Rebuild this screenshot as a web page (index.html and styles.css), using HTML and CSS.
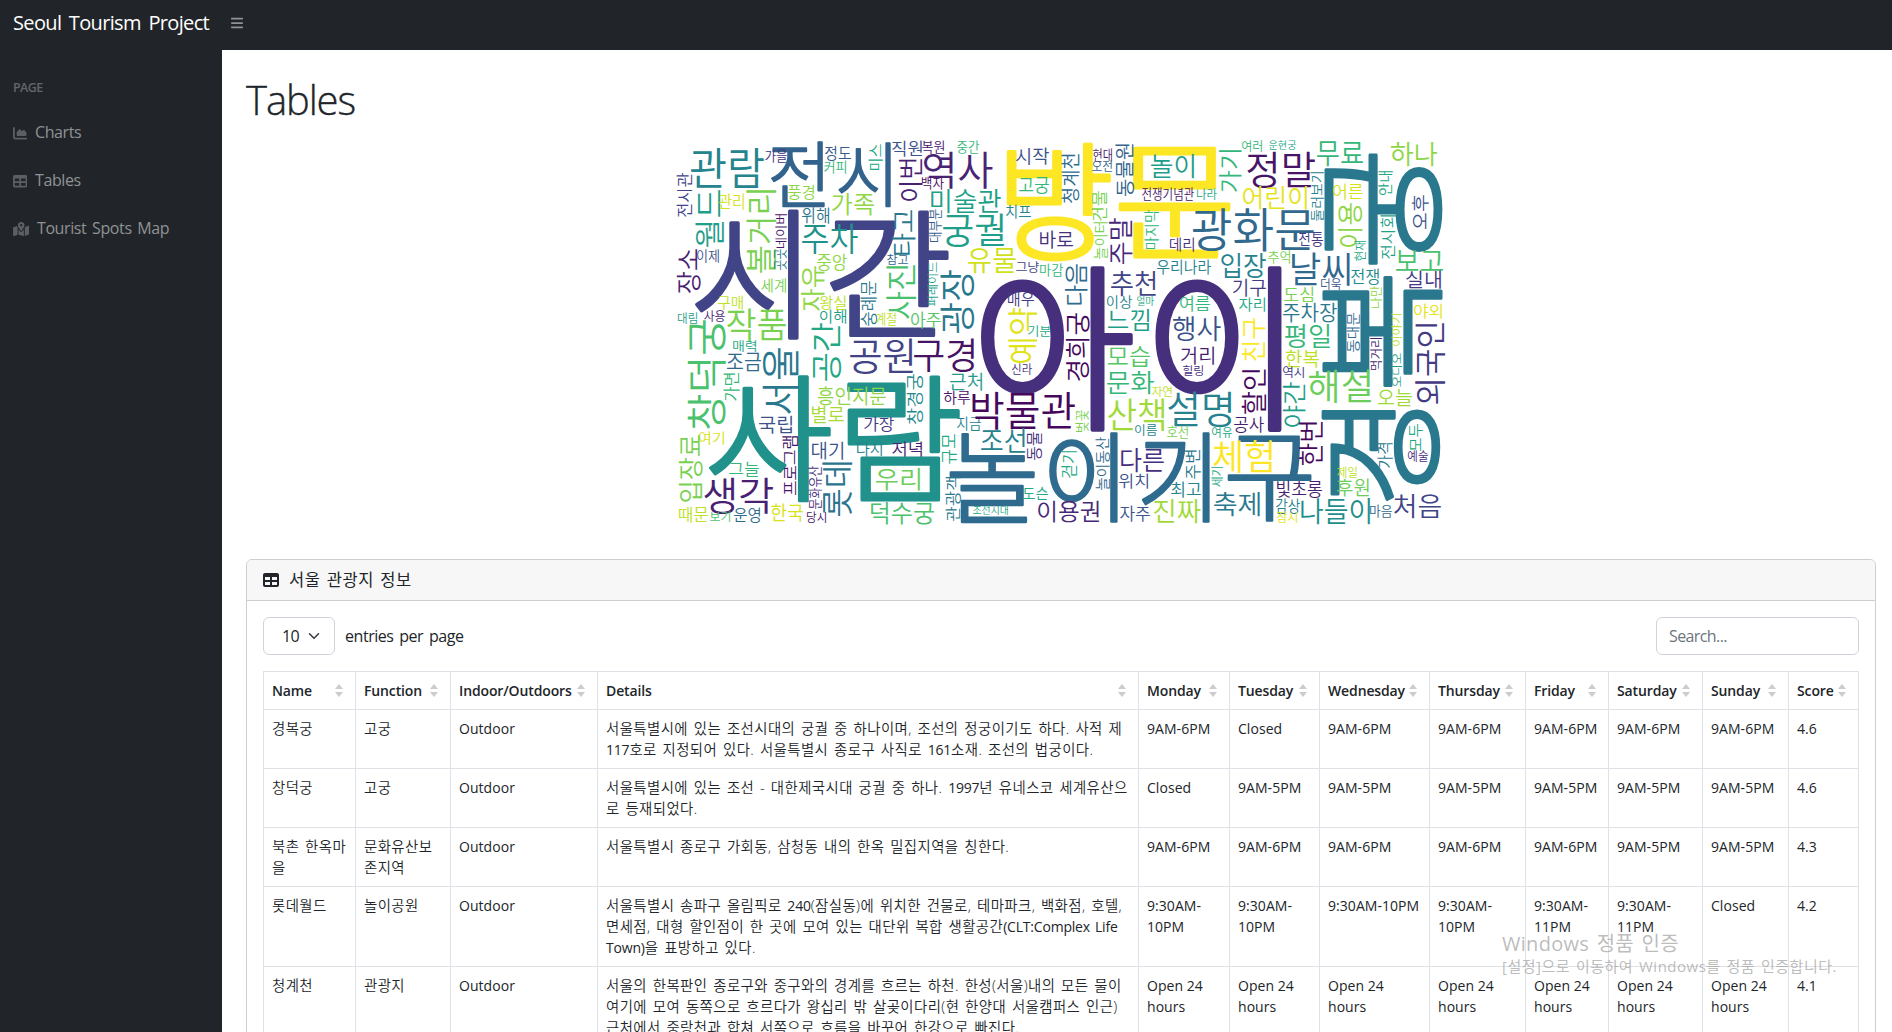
FILE: index.html
```html
<!DOCTYPE html>
<html lang="ko">
<head>
<meta charset="utf-8">
<title>Seoul Tourism Project</title>
<link rel="stylesheet" href="styles.css">
</head>
<body>
<nav class="topnav">
  <a class="brand">Seoul Tourism Project</a>
  <svg class="bars" viewBox="0 0 448 512"><path d="M0 96C0 78.3 14.3 64 32 64H416c17.7 0 32 14.3 32 32s-14.3 32-32 32H32C14.3 128 0 113.7 0 96zM0 256c0-17.7 14.3-32 32-32H416c17.7 0 32 14.3 32 32s-14.3 32-32 32H32c-17.7 0-32-14.3-32-32zM448 416c0 17.7-14.3 32-32 32H32c-17.7 0-32-14.3-32-32s14.3-32 32-32H416c17.7 0 32 14.3 32 32z"/></svg>
</nav>
<div class="layout">
  <aside class="sidenav">
    <div class="heading">PAGE</div>
    <a class="link"><svg viewBox="0 0 512 512"><path d="M64 64c0-17.7-14.3-32-32-32S0 46.3 0 64V400c0 44.2 35.8 80 80 80H480c17.7 0 32-14.3 32-32s-14.3-32-32-32H80c-8.8 0-16-7.2-16-16V64zm96 288H448c17.7 0 32-14.3 32-32V251.8c0-7.6-2.7-15-7.7-20.8l-65.8-76.8c-12.1-14.2-33.7-15-46.9-1.8l-21 21c-10 10-26.4 9.2-35.4-1.6l-39.2-47c-12.6-15.1-35.7-15.4-48.7-.6L135.9 215c-5.1 5.8-7.9 13.3-7.9 21.1v84c0 17.7 14.3 32 32 32z"/></svg>Charts</a>
    <a class="link"><svg viewBox="0 0 512 512"><path d="M64 256V160H224v96H64zm0 64H224v96H64V320zm224 96V320H448v96H288zM448 256H288V160H448v96zM64 32C28.7 32 0 60.7 0 96V416c0 35.3 28.7 64 64 64H448c35.3 0 64-28.7 64-64V96c0-35.3-28.7-64-64-64H64z"/></svg>Tables</a>
    <a class="link map"><svg viewBox="0 0 576 512"><path d="M408 120c0 54.6-73.1 151.9-105.2 192c-7.7 9.6-22 9.6-29.6 0C241.1 271.9 168 174.6 168 120C168 53.7 221.7 0 288 0s120 53.7 120 120zm8 80.4c3.5-6.9 6.7-13.8 9.6-20.6c.5-1.2 1-2.5 1.5-3.7l116-46.4C558.9 123.4 576 135 576 152V422.8c0 9.8-6 18.6-15.1 22.3L416 503V200.4zM137.6 138.3c2.4 14.1 7.2 28.3 12.8 41.5c2.9 6.8 6.1 13.7 9.6 20.6V451.8L32.9 502.7C17.1 509 0 497.4 0 480.4V209.6c0-9.8 6-18.6 15.1-22.3l122.6-49zM327.8 332c13.9-17.4 35.7-45.7 56.2-77V504.3L192 449.4V255c20.5 31.3 42.3 59.6 56.2 77c20.5 25.6 59.1 25.6 79.6 0zM288 152a40 40 0 1 0 0-80 40 40 0 1 0 0 80z"/></svg>Tourist Spots Map</a>
  </aside>
  <main class="content">
    <h1>Tables</h1>
    <svg class="cloud" id="cloud" viewBox="0 0 800 400"></svg>
    <section class="card">
      <header class="card-head"><svg viewBox="0 0 512 512"><path d="M64 256V160H224v96H64zm0 64H224v96H64V320zm224 96V320H448v96H288zM448 256H288V160H448v96zM64 32C28.7 32 0 60.7 0 96V416c0 35.3 28.7 64 64 64H448c35.3 0 64-28.7 64-64V96c0-35.3-28.7-64-64-64H64z"/></svg>서울 관광지 정보</header>
      <div class="card-body">
        <div class="controls">
          <div class="select">10<svg viewBox="0 0 16 16"><path d="m2 5 6 6 6-6"/></svg></div>
          <span class="per-page">entries per page</span>
          <input class="search" placeholder="Search...">
        </div>
        <table>
          <colgroup><col class="w92"><col class="w95"><col class="w147"><col class="w541"><col class="w91"><col class="w90"><col class="w110"><col class="w96"><col class="w83"><col class="w94"><col class="w86"><col class="w70"></colgroup>
          <thead><tr>
            <th><div>Name<i></i></div></th><th><div>Function<i></i></div></th><th><div>Indoor/Outdoors<i></i></div></th><th><div>Details<i></i></div></th><th><div>Monday<i></i></div></th><th><div>Tuesday<i></i></div></th><th><div>Wednesday<i></i></div></th><th><div>Thursday<i></i></div></th><th><div>Friday<i></i></div></th><th><div>Saturday<i></i></div></th><th><div>Sunday<i></i></div></th><th><div>Score<i></i></div></th>
          </tr></thead>
          <tbody>
            <tr><td class="ko">경복궁</td><td class="ko">고궁</td><td>Outdoor</td><td class="ko">서울특별시에 있는 조선시대의 궁궐 중 하나이며, 조선의 정궁이기도 하다. 사적 제<br><b>117</b>호로 지정되어 있다. 서울특별시 종로구 사직로 <b>161</b>소재. 조선의 법궁이다.</td><td>9AM-6PM</td><td>Closed</td><td>9AM-6PM</td><td>9AM-6PM</td><td>9AM-6PM</td><td>9AM-6PM</td><td>9AM-6PM</td><td>4.6</td></tr>
            <tr><td class="ko">창덕궁</td><td class="ko">고궁</td><td>Outdoor</td><td class="ko">서울특별시에 있는 조선 - 대한제국시대 궁궐 중 하나. <b>1997</b>년 유네스코 세계유산으<br>로 등재되었다.</td><td>Closed</td><td>9AM-5PM</td><td>9AM-5PM</td><td>9AM-5PM</td><td>9AM-5PM</td><td>9AM-5PM</td><td>9AM-5PM</td><td>4.6</td></tr>
            <tr><td class="ko">북촌 한옥마<br>을</td><td class="ko">문화유산보<br>존지역</td><td>Outdoor</td><td class="ko">서울특별시 종로구 가회동, 삼청동 내의 한옥 밀집지역을 칭한다.</td><td>9AM-6PM</td><td>9AM-6PM</td><td>9AM-6PM</td><td>9AM-6PM</td><td>9AM-6PM</td><td>9AM-5PM</td><td>9AM-5PM</td><td>4.3</td></tr>
            <tr><td class="ko">롯데월드</td><td class="ko">놀이공원</td><td>Outdoor</td><td class="ko">서울특별시 송파구 올림픽로 <b>240</b>(잠실동)에 위치한 건물로, 테마파크, 백화점, 호텔,<br>면세점, 대형 할인점이 한 곳에 모여 있는 대단위 복합 생활공간<b>(CLT:Complex Life</b><br><b>Town)</b>을 표방하고 있다.</td><td>9:30AM-<br>10PM</td><td>9:30AM-<br>10PM</td><td>9:30AM-10PM</td><td>9:30AM-<br>10PM</td><td>9:30AM-<br>11PM</td><td>9:30AM-<br>11PM</td><td>Closed</td><td>4.2</td></tr>
            <tr><td class="ko">청계천</td><td class="ko">관광지</td><td>Outdoor</td><td class="ko">서울의 한복판인 종로구와 중구와의 경계를 흐르는 하천. 한성(서울)내의 모든 물이<br>여기에 모여 동쪽으로 흐르다가 왕십리 밖 살곶이다리(현 한양대 서울캠퍼스 인근)<br>근처에서 중랑천과 합쳐 서쪽으로 흐름을 바꾸어 한강으로 빠진다.</td><td>Open 24<br>hours</td><td>Open 24<br>hours</td><td>Open 24<br>hours</td><td>Open 24<br>hours</td><td>Open 24<br>hours</td><td>Open 24<br>hours</td><td>Open 24<br>hours</td><td>4.1</td></tr>
          </tbody>
        </table>
      </div>
    </section>
  </main>
</div>
<div class="activation"><p class="act-title">Windows 정품 인증</p><p class="act-sub">[설정]으로 이동하여 Windows를 정품 인증합니다.</p></div>
<script src="cloud.js"></script>
</body>
</html>
```
FILE: styles.css
```css
* { box-sizing: border-box; }
body {
  margin: 0;
  height: 1032px;
  overflow: hidden;
  background: #fff;
  color: #212529;
  font: 16px/1.5 "Open Sans", "Noto Sans CJK KR", sans-serif;
}
.topnav {
  display: flex;
  align-items: center;
  height: 50px;
  padding: 0 0 4px 13px;
  background: #212529;
}
.brand { width: 217px; color: #fff; font-size: 20px; letter-spacing: -.65px; word-spacing: 3px; white-space: nowrap; }
.bars { width: 14px; height: 14px; fill: #909294; }
.layout { display: flex; height: 982px; }
.sidenav {
  flex: 0 0 222px;
  padding: 27px 0 0 13px;
  background: #212529;
}
.heading { height: 31px; color: #636669; font-size: 12.5px; line-height: 22px; font-weight: 600; letter-spacing: -.6px; }
.link { display: flex; align-items: center; height: 48px; color: #909294; letter-spacing: -.4px; word-spacing: 2px; }
.link svg { width: 14.4px; height: 14.4px; margin: 2px 7.6px 0 0; fill: #5c5f63; }
.link.map svg { width: 16.4px; }
.content { flex: 1; min-width: 0; padding: 24px 16px 0 24px; overflow: hidden; }
h1 { margin: 0 0 8px; font-size: 40px; line-height: 48px; font-weight: 300; letter-spacing: -1.1px; padding-top: 2px; height: 48px; -webkit-text-stroke: .35px #212529; }
.cloud { display: block; width: 800px; height: 400px; margin: 0 auto 29px; overflow: visible; }
.cloud text { font-family: "Noto Sans CJK KR", sans-serif; font-size: 100px; font-weight: 350; }
.cloud .big { font-weight: 300; stroke-linejoin: round; vector-effect: non-scaling-stroke; }
.card { height: 600px; border: 1px solid #cdced0; border-radius: 6px; }
.card-head {
  display: flex;
  align-items: center;
  height: 41px;
  padding-left: 16px;
  border-bottom: 1px solid #cdced0;
  border-radius: 5px 5px 0 0;
  background: #f7f7f7;
  font-size: 16.5px;
  letter-spacing: .5px;
  word-spacing: 1.7px;
}
.card-head svg { width: 16px; height: 16px; margin-right: 10px; fill: #212529; }
.card-body { padding: 16px; }
.controls { display: flex; align-items: center; height: 38px; margin-bottom: 16px; }
.select {
  display: flex;
  align-items: center;
  width: 72px;
  height: 38px;
  padding-left: 18px;
  border: 1px solid #ced4da;
  border-radius: 6px;
  letter-spacing: -.6px;
}
.select svg { width: 12px; height: 12px; margin-left: 9px; fill: none; stroke: #343a40; stroke-width: 2; stroke-linecap: round; stroke-linejoin: round; }
.per-page { margin-left: 10px; letter-spacing: -.45px; word-spacing: 2px; }
.search {
  width: 203px;
  height: 38px;
  margin-left: auto;
  padding: 0 12px;
  border: 1px solid #ced4da;
  border-radius: 6px;
  font: inherit;
  letter-spacing: -.6px;
}
.search::placeholder { color: #6c757d; opacity: 1; }
table { width: 1596px; border-collapse: collapse; table-layout: fixed; font-size: 14px; line-height: 21px; white-space: nowrap; }
th, td { padding: 8px; border: 1px solid #dee2e6; text-align: left; vertical-align: top; letter-spacing: .05px; }
th { font-weight: 600; letter-spacing: -.13px; }
th div { display: flex; justify-content: space-between; align-items: center; height: 21px; margin-right: 4px; }
th i { display: flex; flex: none; flex-direction: column; justify-content: space-between; width: 8px; height: 13px; }
th i::before, th i::after { content: ""; border: 4px solid transparent; border-top-width: 0; border-bottom: 5px solid #ccc; }
th i::after { border-bottom-width: 0; border-bottom-color: transparent; border-top: 5px solid #ccc; }
.ko { font-size: 14.4px; letter-spacing: .43px; word-spacing: 1.6px; font-weight: 350; }
.ko b { font-weight: 400; font-size: 14px; letter-spacing: -.2px; }
.w92 { width: 92px; } .w95 { width: 95px; } .w147 { width: 147px; } .w541 { width: 541px; }
.w91 { width: 91px; } .w90 { width: 90px; } .w110 { width: 110px; } .w96 { width: 96px; }
.w83 { width: 83px; } .w94 { width: 94px; } .w86 { width: 86px; } .w70 { width: 70px; }
.activation { position: absolute; left: 1502px; top: 929px; color: rgba(150,150,150,.65); white-space: nowrap; }
.activation p { margin: 0; }
.act-title { font-size: 20px; line-height: 30px; letter-spacing: .3px; word-spacing: 2px; }
.act-sub { font-size: 15px; line-height: 15px; letter-spacing: .5px; word-spacing: 1.5px; }
```
FILE: cloud.js
```js
// Each entry: text, left, top, right, bottom, colour, 1 when turned to read upwards.
// The largest words are set syllable by syllable.
const words = [
["전",110,11,164,77,"#33638d"],["시",177,11,230,77,"#33638d"],
["시",33,79,138,211,"#414487"],["간",167,79,289,208,"#414487"],
["사",48,244,170,372,"#21918c"],["람",186,244,300,371,"#21918c"],
["방",345,13,451,133,"#fde725"],["문",457,17,571,130,"#fde725"],
["아",318,135,472,302,"#46307e"],["이",492,135,621,302,"#46307e"],
["놀",288,302,375,393,"#2f6b8e"],["이",387,302,457,393,"#2f6b8e"],["기",480,302,549,393,"#2f6b8e"],["구",566,305,652,392,"#2f6b8e"],
["경",661,278,781,372,"#2a788e",1],["복",661,144,782,258,"#2a788e",1],["궁",664,22,782,136,"#2a788e",1],
["관람",30,18,103,58,"#25858e"],["가을",104,20,126,32,"#46307e"],["정도",164,16,190,30,"#38598c"],
["커피",163,31,185,43,"#35b779"],["전시관",16,43,31,87,"#414487",1],["월드",34,60,62,117,"#1f9e89",1],["관리",58,64,83,79,"#d8e219"],
["볼거리",85,60,114,143,"#7ad151",1],["풍경",127,55,153,69,"#8ed645"],["가족",171,63,213,85,"#8ed645"],["위해",141,78,168,93,"#2c738e"],
["주차",141,94,197,124,"#21918c"],["네이버",115,84,126,118,"#481467",1],["이제",36,120,58,132,"#3b528b"],["곳곳",113,119,125,140,"#2a788e",1],
["중앙",156,124,186,140,"#8ed645"],["장소",16,119,39,163,"#482173",1],["세계",100,149,125,162,"#7ad151"],
["자유",140,136,163,181,"#8ed645",1],["왕실",159,166,185,179,"#bddf26"],["구매",57,166,82,179,"#bddf26"],["이해",159,180,185,193,"#1f9e89"],
["숭례문",200,151,215,196,"#2a788e",1],["대림",17,183,36,194,"#1f9e89"],["사용",43,181,64,192,"#482173"],["작품",66,179,125,211,"#7ad151"],
["창덕궁",26,190,64,299,"#4ac16d",1],["서울",102,218,137,284,"#2a788e",1],["공간",150,193,179,251,"#22a884",1],["매력",72,211,95,222,"#22a884"],
["조금",66,223,100,241,"#31688e"],["가면",63,243,78,271,"#35b779",1],["흥인지문",157,257,225,276,"#8ed645"],
["별로",151,276,183,293,"#a5db36"],["국립",98,286,131,304,"#3b528b"],["여기",38,302,63,314,"#d8e219"],["입장료",18,305,41,372,"#7ad151",1],
["그늘",68,332,98,346,"#35b779"],["프로그램",122,306,136,365,"#481467",1],["대기",151,312,182,329,"#3b528b"],["롯데",161,332,190,386,"#2c738e",1],
["문화유산",148,336,160,379,"#46307e",1],["생각",43,348,112,383,"#482173"],["때문",18,377,47,392,"#bddf26"],["보기",49,382,69,392,"#4ac16d"],
["운영",73,378,99,392,"#2f6b8e"],["한국",110,374,142,392,"#d8e219"],["당시",146,382,165,393,"#481467"],
["미스",208,14,221,40,"#22a884",1],["직원",231,11,261,26,"#3b528b"],["복원",261,11,283,23,"#481467"],["중간",296,11,318,23,"#35b779"],
["이번",238,29,261,71,"#482173",1],["역사",263,22,332,58,"#482475"],["백자",261,47,283,59,"#46085c"],["미술관",270,59,340,83,"#1fa188"],
["타고",231,80,254,125,"#2a788e",1],["대부분",268,79,280,112,"#33638d",1],["궁궐",282,84,343,117,"#1f9e89"],["치프",345,75,370,88,"#24868e"],
["유물",307,118,355,143,"#d0e11c"],["참고",226,124,247,135,"#33638d"],["사진",225,135,254,189,"#4ac16d",1],["퍼레이드",267,132,277,176,"#1f9e89",1],
["그냥",355,132,378,143,"#414487"],["마감",379,134,402,146,"#35b779"],["광장",280,140,313,203,"#2a788e",1],["계절",215,183,235,195,"#bddf26"],
["아주",250,182,280,198,"#55c667"],["매우",347,162,373,176,"#443983"],["예약",347,178,375,233,"#dfe318",1],["기분",367,196,390,207,"#22a884"],
["신라",351,234,371,245,"#46307e"],["시작",355,17,388,34,"#3b528b"],["고궁",358,47,388,63,"#35b779"],
["바로",379,101,412,119,"#46307e"],["공원",189,209,252,243,"#414487"],["구경",253,209,313,242,"#471365"],
["창경궁",245,244,261,294,"#22898d",1],["근처",289,243,321,261,"#2a9a8c"],["하루",283,261,309,274,"#481467"],["가장",203,287,233,301,"#443983"],
["지금",296,287,320,300,"#26828e"],["박물관",311,262,414,299,"#46085c"],["다시",196,312,221,326,"#26828e"],["저녁",231,312,261,326,"#481f70"],
["조선",320,299,364,323,"#26828e"],["규모",281,304,295,334,"#22a884",1],["동물",366,302,380,330,"#46307e",1],["우리",215,338,259,360,"#6ccd5a"],
["관광객",285,347,299,391,"#2a788e",1],["덕수궁",210,372,273,394,"#4ac16d"],["조선시대",312,376,347,385,"#22a884"],
["도슨",362,357,387,370,"#22a884"],["이용권",377,371,438,392,"#482878"],
["청계천",401,24,419,73,"#2f6b8e",1],["현대",432,19,451,31,"#481467"],["오전",431,31,451,42,"#33638d"],["동물원",455,14,473,66,"#33638d",1],
["놀이",490,24,533,48,"#1f9e89"],["가기",558,20,580,62,"#35b779",1],["여러",581,11,601,22,"#35b779"],["전쟁기념관",481,58,533,70,"#481467"],
["나라",536,59,556,70,"#22a884"],["놀이터",433,92,446,129,"#7ad151",1],["건물",431,61,446,91,"#7ad151",1],["주말",448,88,471,134,"#482878",1],
["마지막",484,80,497,119,"#35b779",1],["데리",509,108,533,121,"#46307e"],["광화문",532,79,653,121,"#31688e"],["우리나라",496,130,550,144,"#26828e"],
["다음",404,134,426,175,"#2f6b8e",1],["추천",450,141,495,166,"#414487"],["이상",446,166,471,178,"#26828e"],["얼마",476,167,493,176,"#22a884"],
["여름",519,166,549,181,"#35b779"],["느낌",447,179,488,201,"#1f9e89"],["행사",512,186,560,211,"#3b528b"],["입장",560,123,605,148,"#26828e"],
["기구",572,149,605,166,"#443983"],["자리",578,168,604,181,"#22a884"],["경희궁",405,183,428,251,"#46085c",1],["모습",447,216,489,237,"#55c667"],
["거리",520,217,553,234,"#481f70"],["힐링",522,235,542,246,"#46307e"],["문화",446,241,493,264,"#35b779"],["자연",491,257,511,267,"#bddf26"],
["산책",447,269,503,301,"#a0da39"],["설명",507,262,570,296,"#26828e"],["벚꽃",415,280,427,302,"#7ad151",1],["이름",474,295,496,306,"#26828e"],
["호선",506,296,527,308,"#7ad151"],["여유",551,297,571,308,"#22a884"],["걷기",401,321,415,348,"#22a884",1],["놀이동산",435,307,448,360,"#31688e",1],
["다른",460,318,503,342,"#46307e"],["위치",458,344,487,358,"#3b528b"],["주변",524,320,539,349,"#2a788e",1],["최고",510,352,540,367,"#26828e"],
["세기",551,337,562,357,"#22a884",1],["체험",552,310,611,343,"#fde725"],["자주",459,376,489,391,"#3b528b"],["진짜",493,369,540,393,"#a0da39"],
["축제",553,362,599,386,"#2a788e"],["공사",573,287,603,302,"#481f70"],["할인",581,239,605,284,"#46085c",1],["친구",581,188,604,231,"#fde725",1],
["운현궁",608,11,635,20,"#22a884"],["정말",586,22,654,57,"#481467"],["무료",656,12,702,36,"#35b779"],["하나",730,12,776,36,"#8ed645"],
["어린이",582,56,646,79,"#e5e419"],["둘러보기",650,42,662,91,"#26828e",1],["어른",672,54,702,69,"#d8e219"],
["안내",718,41,731,65,"#22a884",1],["오후",750,65,767,99,"#3b528b",1],["이용",677,73,701,117,"#8ed645",1],["전시회",720,85,734,129,"#1fa188",1],
["전통",638,102,662,116,"#443983"],["현재",694,111,705,131,"#22a884",1],["추억",607,121,629,133,"#7ad151"],["날씨",631,123,689,156,"#31688e"],
["보고",735,120,782,141,"#4ac16d"],["실내",745,141,780,159,"#443983"],["전쟁",690,139,718,154,"#22898d"],["더욱",660,149,680,160,"#3b528b"],
["도심",623,157,652,172,"#7ad151"],["나만",710,156,721,178,"#8ed645",1],["주차장",622,173,676,192,"#2a788e"],["야외",753,174,781,188,"#e5e419"],
["평일",624,194,669,218,"#35b779"],["이야기",731,184,741,216,"#bddf26",1],["동대문",686,183,698,222,"#31688e",1],["한복",625,220,658,238,"#bddf26"],
["역시",622,237,643,248,"#443983"],["야간",622,252,644,297,"#1f9e89",1],["해설",648,240,710,273,"#6ccd5a"],["오늘",717,259,751,276,"#a0da39"],
["먹거리",710,208,721,240,"#481f70",1],["오디오",731,223,741,257,"#1f9e89",1],["외국인",754,193,783,274,"#443983",1],["한번",639,292,662,335,"#46085c",1],
["가격",717,313,731,338,"#2a788e",1],["모두",748,294,761,321,"#22a884",1],["예술",747,321,767,332,"#46307e"],["제일",676,337,696,348,"#bddf26"],
["후원",676,349,708,367,"#6ccd5a"],["빛초롱",616,351,661,367,"#481f70"],["감상",615,369,639,383,"#26828e"],["잠시",616,382,636,393,"#e5e419"],
["나들이",640,368,709,394,"#1f8f8c"],["마음",709,375,731,387,"#31688e"],["처음",733,364,780,388,"#414487"]
];
const svg = document.getElementById("cloud");
const pen = document.createElement("canvas").getContext("2d");
for (const [word, x0, y0, x1, y1, colour, turned] of words) {
  const boxH = turned ? x1 - x0 : y1 - y0;
  const big = boxH > 60;
  const stroke = big ? boxH * .025 : 0;
  // Measured at ten times the drawn size so that rounding does not show.
  pen.font = `${big ? 300 : 350} 1000px "Noto Sans CJK KR"`;
  const m = pen.measureText(word);
  const left = m.actualBoundingBoxLeft / 10;
  const up = m.actualBoundingBoxAscent / 10;
  const inkW = m.actualBoundingBoxRight / 10 + left;
  const inkH = m.actualBoundingBoxDescent / 10 + up;
  const w = (turned ? y1 - y0 : x1 - x0) - stroke;
  const h = boxH - stroke;
  const s = stroke / 2;
  const place = turned ? `translate(${x0 + s} ${y1 - s}) rotate(-90)` : `translate(${x0 + s} ${y0 + s})`;
  const t = document.createElementNS("http://www.w3.org/2000/svg", "text");
  t.textContent = word;
  t.setAttribute("fill", colour);
  if (big) {
    t.setAttribute("class", "big");
    t.setAttribute("stroke", colour);
    t.setAttribute("stroke-width", stroke);
  }
  t.setAttribute("transform", `${place} scale(${w / inkW} ${h / inkH}) translate(${left} ${up})`);
  svg.append(t);
}
```
